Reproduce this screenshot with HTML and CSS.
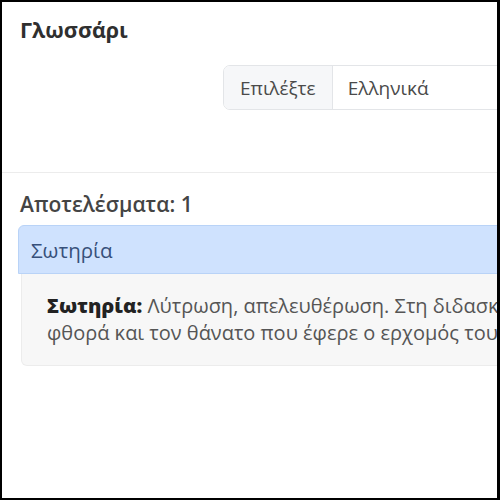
FILE: index.html
```html
<!DOCTYPE html>
<html lang="el">
<head>
<meta charset="utf-8">
<title>Γλωσσάρι</title>
<link rel="stylesheet" href="styles.css">
</head>
<body>
<div class="frame">
  <div class="page">
    <h1 class="title">Γλωσσάρι</h1>
    <div class="controls">
      <div class="input-group">
        <span class="addon">Επιλέξτε</span>
        <span class="select">Ελληνικά</span>
      </div>
    </div>
    <hr class="divider">
    <h2 class="count">Αποτελέσματα: 1</h2>
    <div class="result">
      <div class="result-head">Σωτηρία</div>
      <div class="result-body">
        <p><strong>Σωτηρία:</strong> Λύτρωση, απελευθέρωση. Στη διδασκαλία της Εκκλησίας, η απαλλαγή από την αμαρτία, τη<br>φθορά και τον θάνατο που έφερε ο ερχομός του Χριστού στον κόσμο.</p>
      </div>
    </div>
  </div>
</div>
</body>
</html>
```

FILE: styles.css
```css
html, body {
  margin: 0;
  padding: 0;
  width: 500px;
  height: 500px;
  overflow: hidden;
  background: #fff;
}
.frame {
  box-sizing: border-box;
  width: 500px;
  height: 500px;
  border: 2px solid #000;
  border-right-width: 3px;
  overflow: hidden;
  background: #fff;
}
.page {
  width: 900px;
  padding: 0 0 0 18px;
  font-family: "Open Sans", "Noto Sans", sans-serif;
  color: #333;
}
.title {
  margin: 0;
  padding-top: 13px;
  font-size: 21.5px;
  font-weight: 700;
  line-height: 30px;
  color: #2f2f2f;
}
.controls {
  padding-left: 203px;
  margin-top: 20px;
}
.input-group {
  display: flex;
  height: 45px;
  width: 560px;
  border: 1px solid #e3e5e8;
  border-radius: 7px;
  box-sizing: border-box;
  overflow: hidden;
}
.addon {
  display: flex;
  align-items: center;
  padding: 0 16px 0 16px;
  background: #f6f7f9;
  border-right: 1px solid #e3e5e8;
  font-size: 19px;
  color: #4a4a4a;
}
.select {
  display: flex;
  align-items: center;
  padding-left: 15px;
  font-size: 19px;
  color: #4a4a4a;
  background: #fff;
}
.divider {
  margin: 62px 0 0 -18px;
  border: 0;
  border-top: 1px solid #ececec;
}
.count {
  margin: 17px 0 0;
  font-size: 21px;
  font-weight: 600;
  line-height: 28px;
  color: #444;
}
.result {
  margin-top: 7px;
  margin-left: -2px;
}
.result-head {
  box-sizing: border-box;
  height: 49px;
  display: flex;
  align-items: center;
  padding-left: 12px;
  background: #cfe2fe;
  border: 1px solid #b9d3f7;
  border-radius: 6px 6px 0 0;
  font-size: 20.5px;
  color: #37507a;
}
.result-body {
  margin-left: 3px;
  padding: 18px 0 19px 25px;
  background: #f7f7f7;
  border: 1px solid #ececec;
  border-top: 0;
  border-radius: 0 0 6px 6px;
}
.result-body p {
  margin: 0;
  white-space: nowrap;
  font-size: 20px;
  line-height: 27px;
  color: #555;
}
.result-body strong {
  font-weight: 800;
  color: #222;
}
```
